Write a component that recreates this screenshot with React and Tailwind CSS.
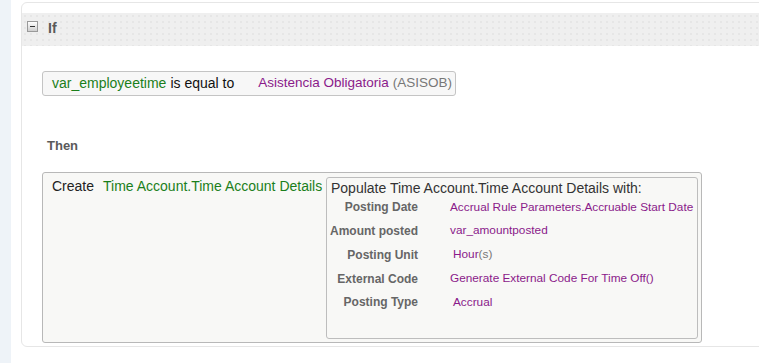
const rows = [
  { label: "Posting Date", value: "Accrual Rule Parameters.Accruable Start Date" },
  { label: "Amount posted", value: "var_amountposted" },
  { label: "Posting Unit", value: "Hour", suffix: "(s)", shift: true },
  { label: "External Code", value: "Generate External Code For Time Off()" },
  { label: "Posting Type", value: "Accrual", shift: true },
];

function CollapseIcon() {
  return (
    <span className="flex h-[11px] w-[11px] items-center justify-center border border-[#9a9a9a] bg-gradient-to-b from-white to-[#cfcfcf]">
      <span className="h-px w-[5px] bg-[#333]" />
    </span>
  );
}

export default function App() {
  return (
    <div
      className="flex h-[363px] w-[759px] overflow-hidden whitespace-nowrap bg-white text-[#333]"
      style={{ fontFamily: '"Liberation Sans", Arial, sans-serif' }}
    >
      <div className="w-[11px] shrink-0 bg-[#eef3f8]" />
      <div className="shrink-0 pl-[10px] pt-[2px]">
        <div className="h-[345px] w-[760px] rounded-[6px] border border-[#e6e6e6] pt-[10px]">
          <div className="flex h-[33px] items-start gap-[10px] bg-[#efefef] bg-[radial-gradient(#e6e6e6_1px,transparent_1px)] bg-[length:6px_6px] px-[5px] pt-[8px]">
            <CollapseIcon />
            <span className="-mt-[3px] text-[14px] font-bold text-[#5a5a5a]">If</span>
          </div>

          <div className="ml-[20px] mt-[25px] flex h-[25px] w-fit items-center rounded-[3px] border border-[#c4c4c4] bg-[#f7f7f7] pl-[9px] pr-[3px] text-[14px]">
            <span className="text-[#1b7f1b]">var_employeetime</span>
            <span className="ml-[4px] text-[#111]">is equal to</span>
            <span className="ml-[24px] text-[13.5px] text-[#8a1a8a]">Asistencia Obligatoria</span>
            <span className="ml-[4px] text-[13.5px] text-[#777]">(ASISOB)</span>
          </div>

          <div className="ml-[25px] mt-[40px] text-[13px] font-bold text-[#5a5a5a]">Then</div>

          <div className="ml-[20px] mt-[16px] flex h-[171px] w-[660px] items-start rounded-[3px] border border-[#b8b8b8] bg-[#f8f8f6] pl-[9px] pr-[3px] pt-[3px] text-[14px]">
            <span className="shrink-0 text-[#222]">Create</span>
            <span className="ml-[9px] shrink-0 text-[#1b7f1b]">Time Account.Time Account Details</span>
            <div className="ml-auto mt-[1px] h-[162px] w-[372px] shrink-0 rounded-[3px] border border-[#bdbdbd] bg-[#f8f8f6]">
              <div className="pl-[4px] text-[14px] text-[#333]">Populate Time Account.Time Account Details with:</div>
              <div className="-mt-[3px] grid grid-cols-[91px_1fr] gap-x-[32px] text-[12px]">
                {rows.map((r) => (
                  <div key={r.label} className="contents">
                    <div className="flex h-[23.75px] items-center justify-end font-bold text-[#666]">{r.label}</div>
                    <div className={`flex h-[23.75px] items-center text-[11.8px] text-[#8a1a8a] ${r.shift ? "pl-[3px]" : ""}`}>
                      {r.value}
                      {r.suffix && <span className="text-[#777]">{r.suffix}</span>}
                    </div>
                  </div>
                ))}
              </div>
            </div>
          </div>
        </div>
      </div>
    </div>
  );
}
